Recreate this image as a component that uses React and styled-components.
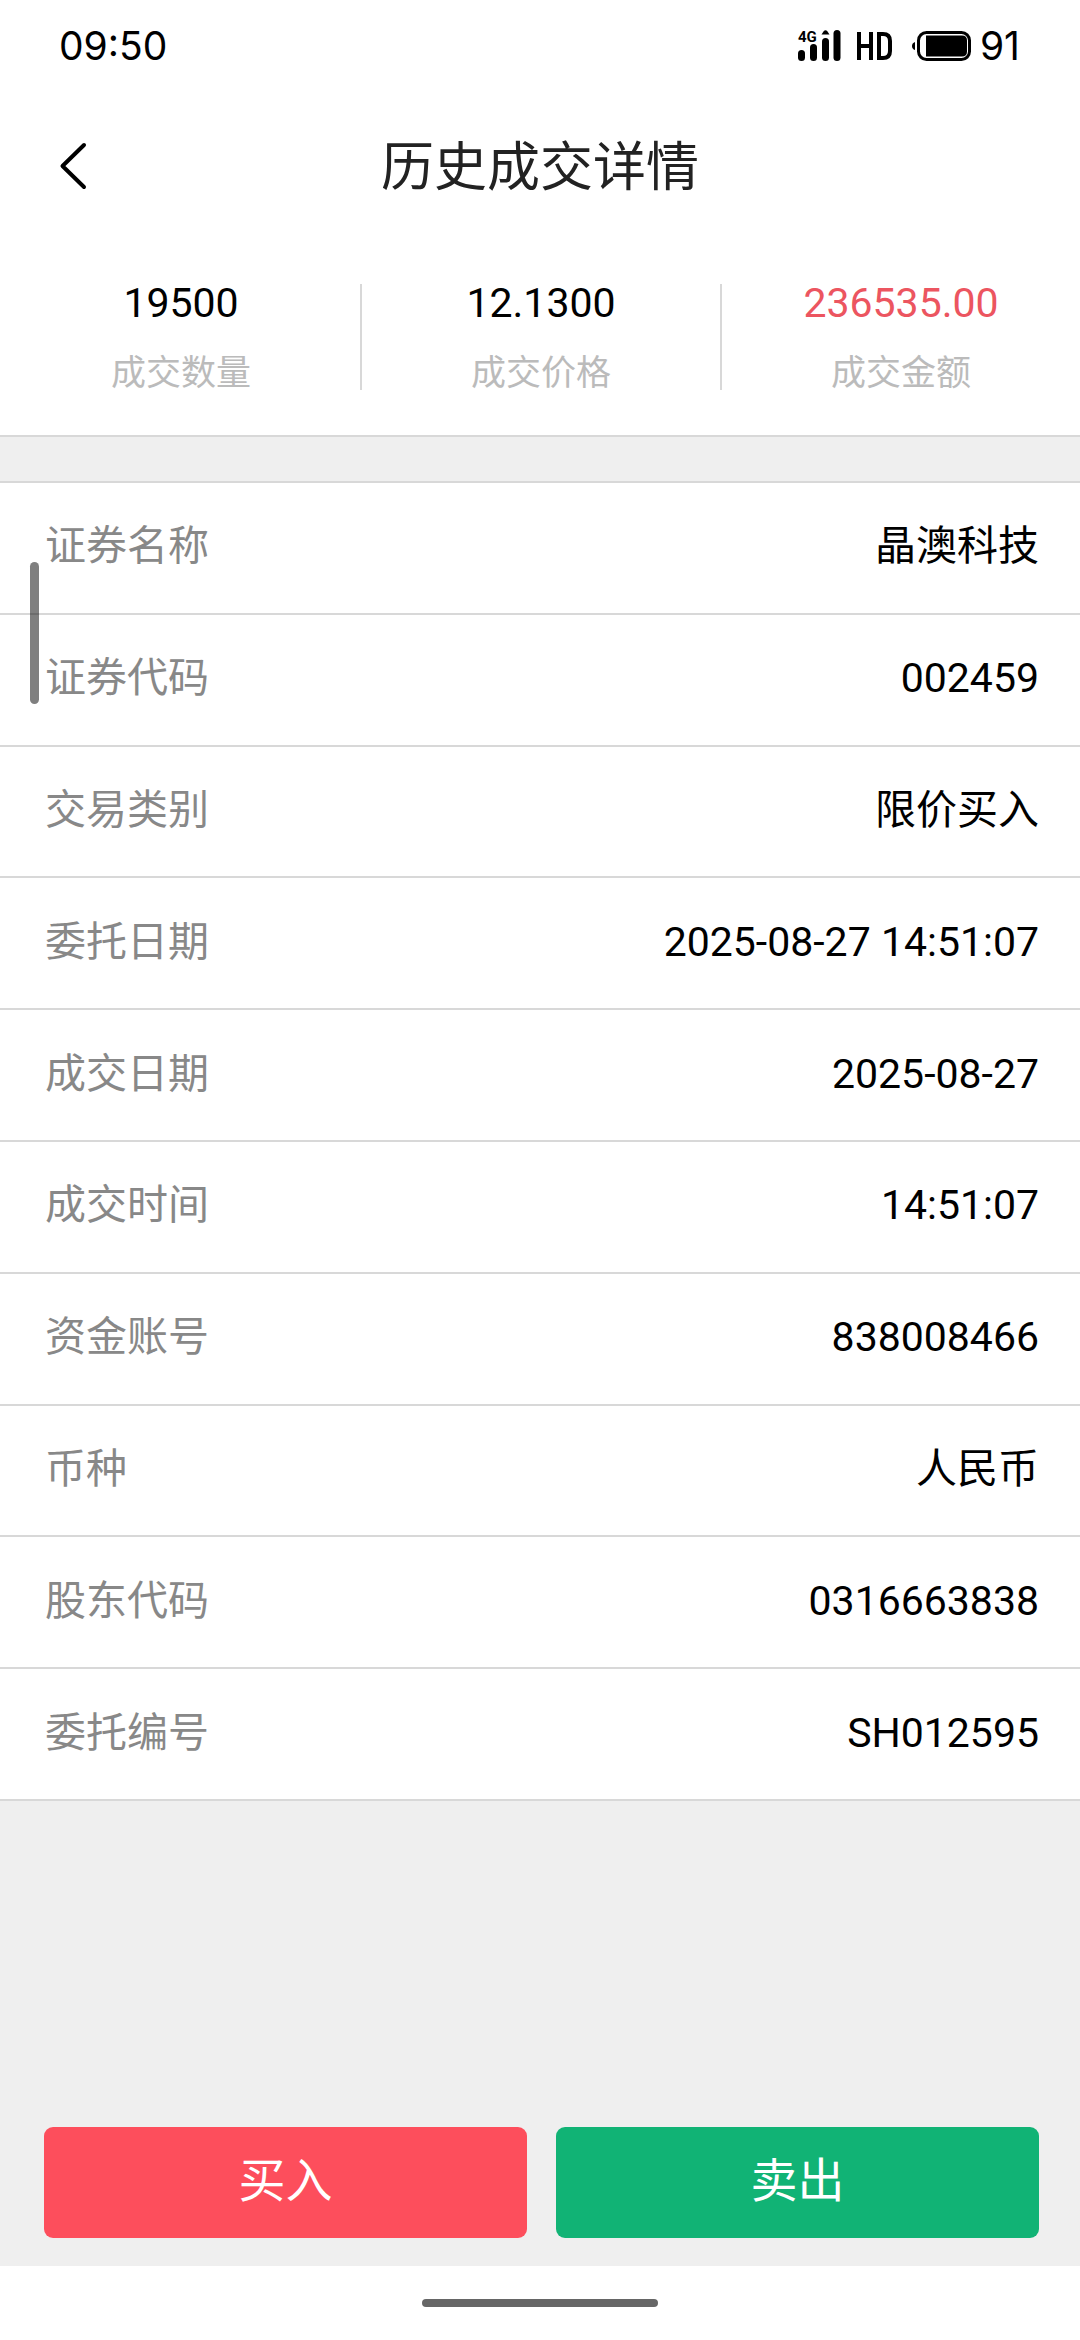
import React from "react";
import styled, { createGlobalStyle } from "styled-components";

const Global = createGlobalStyle`
  *, *::before, *::after { box-sizing: border-box; }
  body {
    margin: 0;
    background: #fff;
    color: #000;
    font-family: Roboto, "Noto Sans CJK SC", sans-serif;
  }
  h1, dl, dt, dd { margin: 0; font-weight: 400; }
  button { font-family: inherit; border: 0; padding: 0; cursor: pointer; }
`;

const Page = styled.div`
  display: flex;
  flex-direction: column;
  min-height: 100vh;
  background: #efefef;
`;

const StatusBar = styled.div`
  display: flex;
  align-items: center;
  justify-content: space-between;
  height: 92px;
  padding: 0 60px 0 59px;
  background: #fff;
  font-family: Inter, sans-serif;
  font-size: 39px;
  font-weight: 400;
  line-height: 48px;
`;

const StatusIcons = styled.div`
  display: flex;
  align-items: center;
  gap: 8px;
`;

const Header = styled.header`
  display: grid;
  grid-template-columns: 120px 1fr 120px;
  align-items: center;
  height: 147px;
  background: #fff;
`;

const BackButton = styled.button`
  display: flex;
  align-items: center;
  height: 100%;
  padding-left: 59px;
  background: none;
`;

const Title = styled.h1`
  padding-top: 4px;
  color: #222;
  font-size: 53px;
  line-height: 80px;
  text-align: center;
`;

const Stats = styled.dl`
  display: flex;
  padding: 45px 0 45px 2px;
  background: #fff;
  border-bottom: 2px solid #d8d8d8;
`;

const Stat = styled.div`
  display: flex;
  flex: 1;
  flex-direction: column-reverse;
  justify-content: flex-end;
  gap: 30px;
  height: 106px;
  text-align: center;

  & + & { border-left: 2px solid #d8d8d8; }
`;

const StatLabel = styled.dt`
  color: #bbb;
  font-size: 35px;
  line-height: 44px;
`;

const StatValue = styled.dd`
  color: ${(p) => (p.$accent ? "#ec5560" : "#000")};
  font-size: 41px;
  line-height: 38px;
`;

const Details = styled.dl`
  display: grid;
  grid-auto-rows: 1fr;
  min-height: 1320px;
  margin-top: 44px;
  background: #fff;
  border-top: 2px solid #d8d8d8;
`;

const Row = styled.div`
  display: flex;
  align-items: center;
  justify-content: space-between;
  padding: 0 41px 3px 45px;
  border-bottom: 2px solid #d8d8d8;
  font-size: 41px;
  line-height: 60px;
`;

const RowLabel = styled.dt`
  color: #888;
`;

const RowValue = styled.dd`
  text-align: right;
`;

const EdgeHandle = styled.div`
  position: absolute;
  top: 562px;
  left: 30px;
  width: 9px;
  height: 142px;
  border-radius: 5px;
  background: rgba(0, 0, 0, 0.5);
`;

const Actions = styled.div`
  display: flex;
  gap: 29px;
  margin-top: auto;
  padding: 28px 41px 28px 44px;
`;

const ActionButton = styled.button`
  flex: 1;
  height: 111px;
  padding-bottom: 4px;
  border-radius: 9px;
  background: ${(p) => (p.$side === "buy" ? "#fd4e5c" : "#11b375")};
  color: #fff;
  font-size: 47px;
  line-height: 70px;
`;

const NavBar = styled.div`
  display: flex;
  align-items: center;
  justify-content: center;
  height: 74px;
  background: #fff;
`;

const HomeIndicator = styled.div`
  width: 236px;
  height: 8px;
  border-radius: 4px;
  background: #666;
`;

const stats = [
  { label: "成交数量", value: "19500" },
  { label: "成交价格", value: "12.1300" },
  { label: "成交金额", value: "236535.00", accent: true },
];

const details = [
  ["证券名称", "晶澳科技"],
  ["证券代码", "002459"],
  ["交易类别", "限价买入"],
  ["委托日期", "2025-08-27 14:51:07"],
  ["成交日期", "2025-08-27"],
  ["成交时间", "14:51:07"],
  ["资金账号", "838008466"],
  ["币种", "人民币"],
  ["股东代码", "0316663838"],
  ["委托编号", "SH012595"],
];

function SignalIcon() {
  return (
    <svg width="51" height="44" viewBox="-1 -6 51 44" aria-label="4G">
      <text x="0" y="12" fontFamily="Roboto, sans-serif" fontSize="15" fontWeight="700">4G</text>
      <rect x="0" y="20" width="7" height="11" rx="3.5" />
      <rect x="12" y="14" width="7" height="17" rx="3.5" />
      <path d="M23.500 4.500L25.500 1.500Q27.500 -1 29.500 1.500L31.500 4.500Z" />
      <rect x="24" y="8" width="7" height="23" rx="3.500" />
      <rect x="35.500" y="0" width="7" height="31" rx="3.500" />
    </svg>
  );
}

function HdIcon() {
  return (
    <svg width="48" height="34" viewBox="0 0 48 34" fill="none" stroke="#000" strokeWidth="4" aria-label="HD">
      <path d="M3 3V31M15 3V31M3 17H15" />
      <path d="M23 5V29H27Q34 29 34 22V12Q34 5 27 5Z" />
    </svg>
  );
}

function BatteryIcon() {
  return (
    <svg width="60" height="32" viewBox="0 0 60 32" aria-hidden="true">
      <path d="M3 12Q0 13 0 16Q0 19 3 20Z" />
      <rect x="6.500" y="2.500" width="51" height="27" rx="8" fill="none" stroke="#000" strokeWidth="3" />
      <path d="M14 5.500H50Q55 5.500 55 10.500V21.500Q55 26.500 50 26.500H14Z" />
    </svg>
  );
}

function BackIcon() {
  return (
    <svg width="28" height="48" viewBox="0 0 28 48" fill="none" stroke="#000" strokeWidth="4" strokeLinecap="round" strokeLinejoin="round">
      <path d="M25 3L3.500 24L25 45" />
    </svg>
  );
}

export default function App() {
  return (
    <Page>
      <Global />
      <StatusBar>
        <span>09:50</span>
        <StatusIcons>
          <SignalIcon />
          <HdIcon />
          <BatteryIcon />
          <span>91</span>
        </StatusIcons>
      </StatusBar>
      <Header>
        <BackButton type="button" aria-label="返回">
          <BackIcon />
        </BackButton>
        <Title>历史成交详情</Title>
      </Header>
      <Stats>
        {stats.map((s) => (
          <Stat key={s.label}>
            <StatLabel>{s.label}</StatLabel>
            <StatValue $accent={s.accent}>{s.value}</StatValue>
          </Stat>
        ))}
      </Stats>
      <Details>
        {details.map(([label, value]) => (
          <Row key={label}>
            <RowLabel>{label}</RowLabel>
            <RowValue>{value}</RowValue>
          </Row>
        ))}
      </Details>
      <Actions>
        <ActionButton type="button" $side="buy">买入</ActionButton>
        <ActionButton type="button" $side="sell">卖出</ActionButton>
      </Actions>
      <NavBar>
        <HomeIndicator />
      </NavBar>
      <EdgeHandle />
    </Page>
  );
}
